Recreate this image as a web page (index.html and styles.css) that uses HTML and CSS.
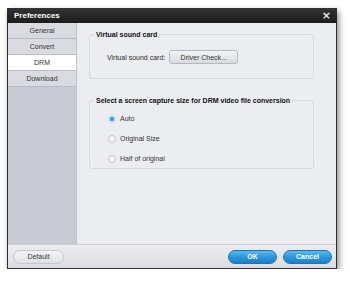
FILE: index.html
```html
<!DOCTYPE html>
<html lang="en">
<head>
  <meta charset="UTF-8" />
  <title>Preferences</title>
  <link rel="stylesheet" href="styles.css">
</head>
<body>
  <div class="window">
    <div class="titlebar">
      <span class="title">Preferences</span>
      <span class="close">&times;</span>
    </div>

    <div class="main">
      <div class="sidebar">
        <div class="tab">General</div>
        <div class="tab">Convert</div>
        <div class="tab active">DRM</div>
        <div class="tab">Download</div>
      </div>

      <div class="content">
        <fieldset class="group group-sound">
          <legend>Virtual sound card</legend>
          <div class="row">
            <span class="label">Virtual sound card:</span>
            <button class="btn-grey btn-driver">Driver Check...</button>
          </div>
        </fieldset>

        <fieldset class="group group-size">
          <legend>Select a screen capture size for DRM video file conversion</legend>
          <div class="radios">
            <label class="radio checked"><span class="dot"></span>Auto</label>
            <label class="radio"><span class="dot"></span>Original Size</label>
            <label class="radio"><span class="dot"></span>Half of original</label>
          </div>
        </fieldset>
      </div>
    </div>

    <div class="footer">
      <button class="btn-grey btn-default">Default</button>
      <div class="footer-right">
        <button class="btn-blue">OK</button>
        <button class="btn-blue">Cancel</button>
      </div>
    </div>
  </div>
</body>
</html>
```

FILE: styles.css
```css
:root {
  --title-bg: #1c1c1c;
  --side-bg: #c8cbd3;
  --tab-bg: #d9dbe1;
  --tab-line: #b9bcc4;
  --content-bg: #ecedf1;
  --group-line: #d6d8dd;
  --text-dark: #2b2b2b;
  --blue: #2a95da;
}

body {
  margin: 0;
  background: #fff;
  font-family: "Liberation Sans", Arial, sans-serif;
  font-size: 7px;
  color: var(--text-dark);
}

.window {
  margin: 8px 0 0 7px;
  width: 330px;
  height: 261px;
  display: flex;
  flex-direction: column;
  border: 1px solid #2e2e2e;
  border-top: none;
  box-sizing: border-box;
  box-shadow: 2px 3px 6px rgba(0,0,0,0.45);
}

.titlebar {
  height: 15px;
  background: linear-gradient(#333, var(--title-bg));
  color: #fff;
  display: flex;
  align-items: center;
  justify-content: space-between;
  padding: 0 6px 0 7px;
  margin: 0 -1px;
}

.title {
  font-weight: bold;
  font-size: 8px;
}

.close {
  font-family: "DejaVu Sans", sans-serif;
  font-weight: bold;
  font-size: 11px;
  line-height: 11px;
  color: #e8e8e8;
}

.main {
  flex: 1;
  display: flex;
}

.sidebar {
  width: 68px;
  background: var(--side-bg);
  border-right: 1px solid #bfc2ca;
}

.tab {
  height: 15px;
  line-height: 15px;
  text-align: center;
  background: var(--tab-bg);
  border-bottom: 1px solid var(--tab-line);
  color: #333;
}

.tab.active {
  background: #fff;
}

.content {
  flex: 1;
  background: var(--content-bg);
  padding: 8px 22px 0 12px;
  display: flex;
  flex-direction: column;
  gap: 18px;
}

.group {
  margin: 0;
  border: 1px solid var(--group-line);
  border-radius: 3px;
  padding: 0 0 0 4px;
  min-width: 0;
}

.group legend {
  font-weight: bold;
  font-size: 7px;
  color: #111;
  padding: 0 2px;
  white-space: nowrap;
}

.group-sound {
  height: 48px;
  box-sizing: border-box;
}

.row {
  display: flex;
  align-items: center;
  gap: 4px;
  padding: 12px 0 0 13px;
}

.btn-grey {
  font-family: inherit;
  font-size: 7px;
  color: #333;
  border: 1px solid #b5b8bf;
  background: linear-gradient(#f4f5f7, #d8dae0);
  border-radius: 3px;
  padding: 0;
}

.btn-driver {
  width: 69px;
  height: 14px;
}

.group-size {
  height: 72px;
  box-sizing: border-box;
}

.radios {
  display: flex;
  flex-direction: column;
  gap: 9px;
  padding: 9px 0 0 14px;
}

.radio {
  display: flex;
  align-items: center;
  gap: 4px;
  height: 11px;
  color: #333;
}

.dot {
  width: 6px;
  height: 6px;
  border-radius: 50%;
  border: 1px solid #c4c6cc;
  background: #f6f6f8;
}

.radio.checked .dot {
  border-color: #bcdcf3;
  background: radial-gradient(circle, #3a9ee2 45%, #d8ebf8 60%);
}

.footer {
  height: 23px;
  background: linear-gradient(#ececf0, #dcdde2);
  border-top: 1px solid #cfd1d6;
  display: flex;
  align-items: center;
  justify-content: space-between;
  padding: 0 4px 0 5px;
}

.btn-default {
  width: 51px;
  height: 14px;
  border-radius: 7px;
  background: linear-gradient(#f3f4f6, #dfe1e5);
  border-color: #c4c7cd;
}

.footer-right {
  display: flex;
  gap: 6px;
}

.btn-blue {
  width: 49px;
  height: 14px;
  border: 1px solid #1b74b8;
  border-radius: 7px;
  background: linear-gradient(#5bb9ee, var(--blue) 55%, #1d7fc9);
  color: #fff;
  font-family: inherit;
  font-weight: bold;
  font-size: 7px;
  padding: 0;
}
```
